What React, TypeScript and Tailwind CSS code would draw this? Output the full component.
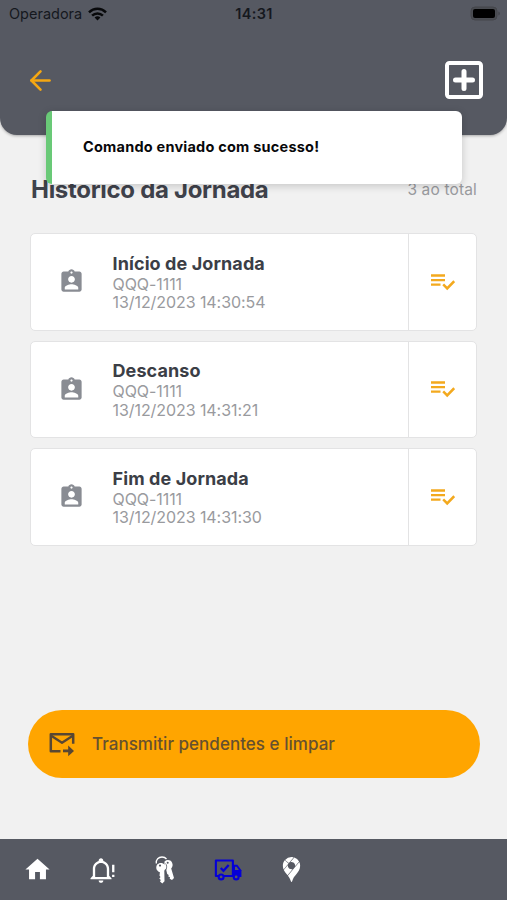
import clsx from "clsx";
import { FiArrowLeft } from "react-icons/fi";
import { MdAssignmentInd, MdHome } from "react-icons/md";
import { SiGooglemaps } from "react-icons/si";

const journeys = [
  { title: "Início de Jornada", plate: "QQQ-1111", date: "13/12/2023 14:30:54" },
  { title: "Descanso", plate: "QQQ-1111", date: "13/12/2023 14:31:21" },
  { title: "Fim de Jornada", plate: "QQQ-1111", date: "13/12/2023 14:31:30" },
];

const WifiIcon = () => (
  <svg width="19" height="14" viewBox="0 0 19 14" fill="none" stroke="#08090b" strokeWidth="2.5">
    <path d="M1 5.3C5.8.7 13.2.7 18 5.3" />
    <path d="M4.1 8.6c3-2.9 7.8-2.9 10.8 0" />
    <path d="M6.6 10.4c1.7-1.5 4.1-1.5 5.8 0L9.5 13.4z" fill="#08090b" stroke="none" />
  </svg>
);

const StatusBar = () => (
  <div className="grid h-[27px] grid-cols-3 items-center pl-[9px] pr-[6px] text-[14.5px] text-[#15181e]">
    <div className="flex items-center gap-[6px]">
      <span>Operadora</span>
      <WifiIcon />
    </div>
    <span className="-ml-[2px] text-center font-semibold tracking-[0.3px]">14:31</span>
    <svg className="justify-self-end" width="31" height="15" viewBox="0 0 31 15">
      <rect x="1" y="1" width="26" height="13" rx="4" fill="#4a4c52" stroke="#44464b" />
      <rect x="3" y="3" width="22" height="9" rx="2" fill="#000" />
      <path d="M28.5 5.5c1.6.7 1.6 3.3 0 4z" fill="#3c3e43" />
    </svg>
  </div>
);

const PlusSquareIcon = () => (
  <svg width="38" height="38" viewBox="0 0 38 38" fill="none" stroke="#fff">
    <rect x="2" y="2" width="34" height="34" rx="2.5" strokeWidth="4" />
    <path d="M19 10.5v17M10.5 19h17" strokeWidth="5" strokeLinecap="round" />
  </svg>
);

const PlaylistCheckIcon = () => (
  <svg className="ml-px" width="24" height="18" viewBox="0 0 24 18" fill="none" stroke="#f3a91e" strokeWidth="2.3">
    <path d="M0 2.5h14M0 7.1h14M0 11.7h9.5" />
    <path d="m12.2 11.4 4 4 7-7.200" strokeWidth="2.5" />
  </svg>
);

const MailForwardIcon = () => (
  <svg width="26" height="26" viewBox="0 0 26 26" fill="none" stroke="#584733" strokeWidth="2.5" strokeLinejoin="round">
    <path d="M11.500 20.200H1.800V3.200h22.400v9.600" />
    <path d="m2.200 4.700 10.800 7.100 10.800-7.100" strokeWidth="2.300" />
    <path d="M14 19.900h6" strokeWidth="2.800" />
    <path d="m19.200 14.600 5.800 5.300-5.800 5.300z" fill="#584733" stroke="none" />
  </svg>
);

const BellAlertIcon = () => (
  <svg width="28" height="28" viewBox="0 0 24 24" fill="currentColor">
    <path d="M10 21h4c0 1.1-.9 2-2 2s-2-.9-2-2M21 19v1H3v-1l2-2v-6c0-3.1 2.03-5.83 5-6.71V4c0-1.1.9-2 2-2s2 .9 2 2v.29c2.97.88 5 3.61 5 6.71v6l2 2m-4-8c0-2.76-2.24-5-5-5s-5 2.24-5 5v7h10v-7" />
    <path d="M21.5 7.5h2V14h-2zM21.5 16h2v2h-2z" />
  </svg>
);

const KeysIcon = () => (
  <svg width="20" height="28" viewBox="0 0 20 28" fill="currentColor">
    <path d="M1.3 7.5C.8 3.5 3.5 1 7 1c2 0 3.5.7 4.5 2" fill="none" stroke="currentColor" strokeWidth="1.3" />
    <path d="M9.5 5.5c2.5-2.2 6-1.7 7.5 1 1.2 2.2.6 4.5-.8 6l2.8 9.5-2 2-2.3-1.2.3-1.6-1.7-.8.4-1.5-1.5-.9-1-4.2-2-1.5z" />
    <path d="M2.2 8.5c2-2.3 5.800-2.100 7.500.3 1.400 2 1 4.300-.4 5.900l.2 10.600-2.200 2.200-2.300-2 .8-1.500-1.500-1.400 1.200-1.500-1-1.400.4-3.500c-3.700-1.200-4.500-5-2.700-7.700z" />
    <path d="M10.5 7.5c1.3 1.3 1.5 3.7.6 6.3" fill="none" stroke="#565962" strokeWidth=".8" />
    <circle cx="5" cy="9.6" r="1.1" fill="#565962" />
    <circle cx="12.7" cy="6.8" r="1" fill="#565962" />
  </svg>
);

const TruckCheckIcon = () => (
  <svg width="28" height="28" viewBox="0 0 24 24" fill="none" stroke="currentColor" strokeWidth="1.8">
    <path d="M4 17.1H1.6V3.9h14.6v13.200H8" strokeLinejoin="round" />
    <path d="m5.800 10.300 2.300 2.300 4.500-4.900" strokeWidth="2" />
    <path d="M16 7.500h4l3.500 4.800V18H16z" fill="currentColor" stroke="none" />
    <path d="M18 9.300h1.400l1.900 2.700H18z" fill="#565962" stroke="none" />
    <circle cx="6.100" cy="17.900" r="2.100" fill="#565962" />
    <circle cx="19" cy="17.900" r="2.100" fill="#565962" />
  </svg>
);

const JourneyCard = ({ title, plate, date }: (typeof journeys)[number]) => (
  <li className="flex h-[97.5px] rounded-[5px] border border-[#e3e3e4] bg-white">
    <div className="flex w-[81.5px] items-center justify-center">
      <MdAssignmentInd className="text-[#898c93]" size={27} />
    </div>
    <div className="flex flex-1 flex-col justify-center">
      <p className="text-[18px] font-bold leading-[23px] tracking-[0.1px] text-[#3b3e46]">{title}</p>
      <p className="text-[16px] leading-[18.5px] tracking-[-0.07px] text-[#999a9e]">{plate}</p>
      <p className="text-[16px] leading-[18.5px] tracking-[-0.07px] text-[#999a9e]">{date}</p>
    </div>
    <div className="flex w-[68.5px] items-center justify-center border-l border-[#e3e3e4]">
      <PlaylistCheckIcon />
    </div>
  </li>
);

const tabs = [
  { id: "home", icon: <MdHome size={29} /> },
  { id: "alerts", icon: <BellAlertIcon /> },
  { id: "keys", icon: <KeysIcon /> },
  { id: "journey", icon: <TruckCheckIcon />, active: true },
  { id: "map", icon: <SiGooglemaps size={25} /> },
];

export default function App() {
  return (
    <div className="relative flex h-[900px] w-[507px] flex-col bg-[#f1f1f1] font-['Inter','Liberation_Sans',sans-serif]">
      <header className="h-[135px] shrink-0 rounded-b-[17px] bg-[#565962] shadow-[0_1px_3px_rgba(0,0,0,0.3)]">
        <StatusBar />
        <div className="flex items-center justify-between pl-[25px] pr-[24px] pt-[34px]">
          <FiArrowLeft className="text-[#f5a712]" size={31} />
          <PlusSquareIcon />
        </div>
      </header>

      <main className="flex flex-1 flex-col px-[30px]">
        <div className="flex items-center justify-between pt-[39px]">
          <h1 className="pl-px text-[24px] font-bold leading-[32px] tracking-[-0.3px] text-[#3f424b]">
            Histórico da Jornada
          </h1>
          <span className="text-[15.5px] tracking-[0.15px] text-[#999a9e]">3 ao total</span>
        </div>
        <ul className="mt-[27px] flex flex-col gap-[10px]">
          {journeys.map((journey) => (
            <JourneyCard key={journey.title} {...journey} />
          ))}
        </ul>
        <button className="-ml-[2px] -mr-[3px] mb-[61px] mt-auto flex h-[68px] items-center gap-[17px] rounded-full bg-[#ffa500] pl-[21px] pr-6 text-left">
          <MailForwardIcon />
          <span className="pt-px text-[17px] font-medium tracking-[0.03px] text-[#65502f]">
            Transmitir pendentes e limpar
          </span>
        </button>
      </main>

      <nav className="flex h-[61px] shrink-0 items-center bg-[#565962] pl-[6px] text-white">
        {tabs.map(({ id, icon, active }) => (
          <div key={id} className={clsx("flex w-[63.5px] justify-center", active && "text-[#0500d8]")}>
            {icon}
          </div>
        ))}
      </nav>

      <div className="absolute left-[46px] top-[111px] flex h-[73px] w-[416px] items-center rounded-[6px] border-l-[6px] border-[#69c977] bg-white pb-[2px] pl-[31px] shadow-[0_2px_8px_rgba(0,0,0,0.18)]">
        <p className="text-[14.5px] font-bold tracking-[0.22px] text-[#08080a]">Comando enviado com sucesso!</p>
      </div>
    </div>
  );
}
